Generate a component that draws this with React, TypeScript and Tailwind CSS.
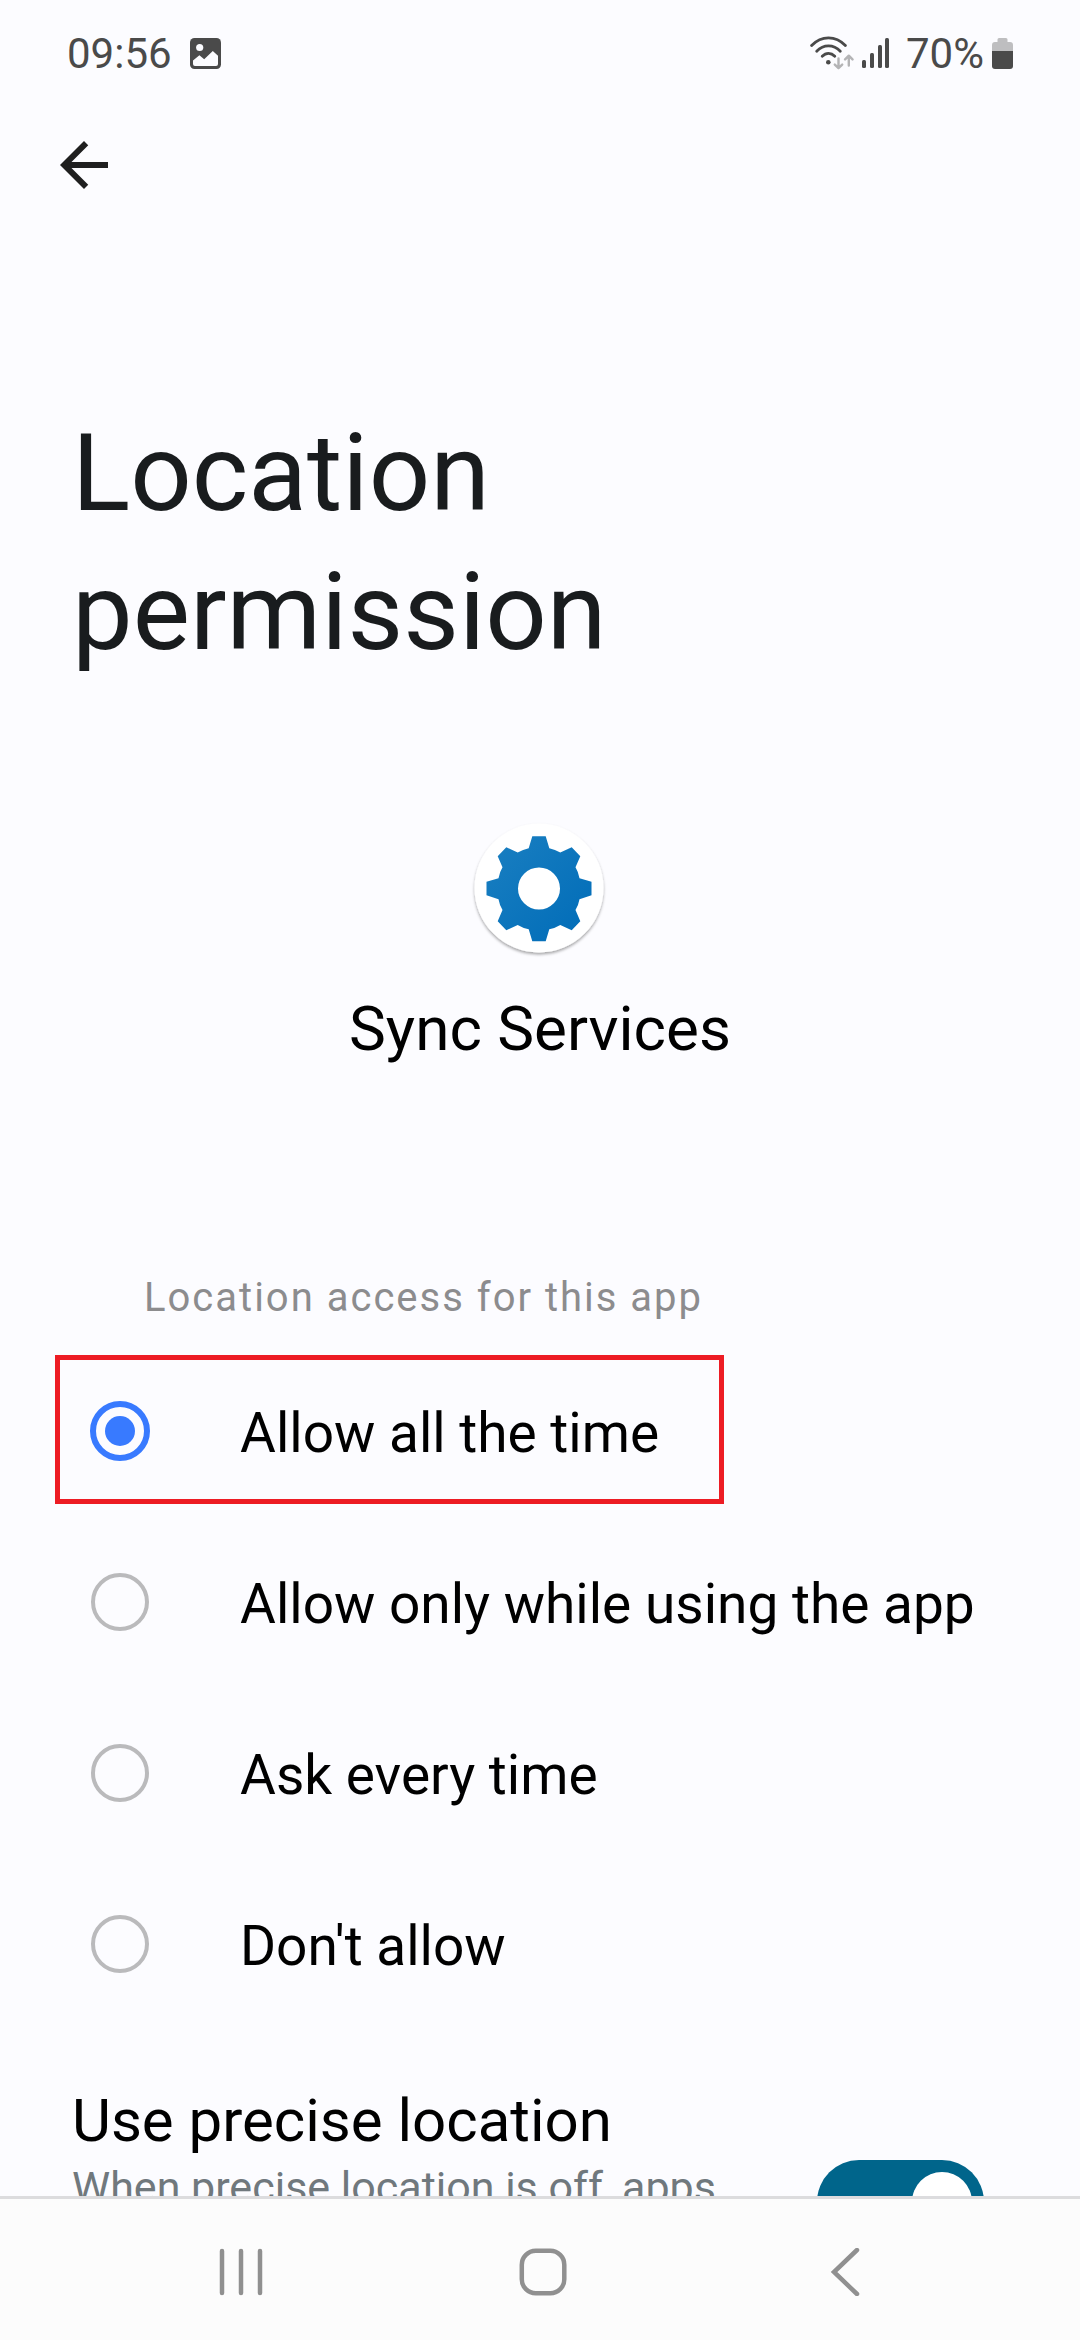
import { useState } from "react";

const OPTIONS = [
  { value: "always", label: "Allow all the time" },
  { value: "foreground", label: "Allow only while using the app" },
  { value: "ask", label: "Ask every time" },
  { value: "deny", label: "Don't allow" },
];

function PictureIcon() {
  return (
    <svg viewBox="0 0 31 31" className="size-[31px]" aria-hidden="true">
      <rect width="31" height="31" rx="4.5" fill="#4a4a4a" />
      <circle cx="9.7" cy="9.5" r="3.6" fill="#fcfcff" />
      <path
        d="M3 22.6 9.4 17.3 14.2 21.2 22.8 13 28 17.8V26a2 2 0 0 1-2 2H5a2 2 0 0 1-2-2z"
        fill="#fcfcff"
      />
    </svg>
  );
}

function WifiIcon() {
  return (
    <svg viewBox="0 0 44 34" className="h-[34px] w-11" fill="none" strokeLinecap="round" aria-hidden="true">
      <g stroke="#4a4a4a" strokeWidth="2.8">
        <path d="M1.6 9.6C11.5-.6 25.5-.6 35.4 9.6" />
        <path d="M6.7 15.2C13.5 8.2 23.5 8.2 30.3 15.2" />
        <path d="M12.2 20.3C16 16.4 21 16.4 24.8 20.3" />
      </g>
      <circle cx="18.3" cy="26.2" r="2.3" fill="#4a4a4a" />
      <g stroke="#b4b4b6" strokeWidth="2.4" strokeLinejoin="round">
        <path d="M28.5 22.5V32M24.8 28.6 28.5 32.2 32.2 28.6" />
        <path d="M38.8 29.5V20M35.1 23.4 38.8 19.7 42.5 23.4" />
      </g>
    </svg>
  );
}

function SignalIcon() {
  return (
    <svg viewBox="0 0 28 30" className="h-[30px] w-7" fill="#4a4a4a" aria-hidden="true">
      <rect x="0" y="22" width="4" height="8" rx="1.5" />
      <rect x="8" y="15" width="4" height="15" rx="1.5" />
      <rect x="16" y="7" width="4" height="23" rx="1.5" />
      <rect x="23" y="0" width="4" height="30" rx="1.5" />
    </svg>
  );
}

function BatteryIcon() {
  return (
    <svg viewBox="0 0 21 31" className="h-[31px] w-[21px]" aria-hidden="true">
      <path
        d="M7 0h7a1.5 1.5 0 0 1 1.5 1.5V4H18a3 3 0 0 1 3 3v6.5H0V7a3 3 0 0 1 3-3h2.5V1.5A1.5 1.5 0 0 1 7 0z"
        fill="#bebec0"
      />
      <path d="M0 13h21v15a3 3 0 0 1-3 3H3a3 3 0 0 1-3-3z" fill="#4a4a4a" />
    </svg>
  );
}

function AppIcon() {
  return (
    <svg viewBox="0 0 144 144" className="size-36" aria-hidden="true">
      <defs>
        <linearGradient id="gear" x1="0" y1="0" x2="1" y2="1">
          <stop offset="0" stopColor="#1a7fc1" />
          <stop offset="1" stopColor="#006cb8" />
        </linearGradient>
        <filter id="shadow" x="-10%" y="-10%" width="120%" height="125%">
          <feDropShadow dx="0" dy="2" stdDeviation="1.5" floodColor="#000" floodOpacity="0.35" />
        </filter>
      </defs>
      <circle cx="71" cy="71" r="64.5" fill="#fff" filter="url(#shadow)" />
      <path
        fill="url(#gear)"
        fillRule="evenodd"
        d="M64.3 19.2H77.7L81.3 31.2Q87 32.4 92.3 35.4L103.7 30.2 112.3 39.3 107.5 50.3Q110.5 55.3 111.5 61.2L123.5 64.8V78.2L111.5 82.2Q110.5 88 107.5 93L112.3 104.2 103.7 113.2 92.3 108Q87 111.2 81.3 112.3L77.7 124.3H64.3L60.7 112.3Q55 111.2 49.7 108L38.3 113.2 29.7 104.2 34.5 93Q31.5 88 30.5 82.2L18.5 78.2V64.8L30.5 61.2Q31.5 55.3 34.5 50.3L29.7 39.3 38.3 30.2 49.7 35.4Q55 32.4 60.7 31.2ZM71 50.5a21 21 0 1 0 0 42 21 21 0 1 0 0-42z"
      />
    </svg>
  );
}

export default function App() {
  const [access, setAccess] = useState("always");
  const [precise, setPrecise] = useState(true);

  return (
    <div className="flex h-screen flex-col bg-[#fcfcff] font-[Roboto,sans-serif] text-black">
      {/* Status bar */}
      <div className="flex h-[106px] shrink-0 items-center justify-between px-[67px] text-[42px] text-[#4a4a4a]">
        <div className="flex items-center gap-[18px]">
          <span>09:56</span>
          <PictureIcon />
        </div>
        <div className="flex items-center gap-2">
          <WifiIcon />
          <SignalIcon />
          <span className="pl-2">70%</span>
          <BatteryIcon />
        </div>
      </div>

      <main className="min-h-0 flex-1 overflow-hidden">
        <button type="button" aria-label="Back" className="mt-[23px] ml-12 block">
          <svg viewBox="0 0 24 24" className="size-[72px]" fill="#1f1f1f" aria-hidden="true">
            <path d="M20 11H7.83l5.59-5.59L12 4l-8 8 8 8 1.41-1.41L7.83 13H20v-2z" />
          </svg>
        </button>

        <h1 className="mt-[203px] max-w-[720px] pl-[72px] text-[108px] leading-[139px] text-[#191c1e]">
          Location permission
        </h1>

        <div className="mt-[135px] flex flex-col items-center">
          <AppIcon />
          <p className="mt-8 text-[62px] leading-[72px]">Sync Services</p>
        </div>

        <fieldset className="mt-[209px]">
          <legend className="pl-36 text-[40px] leading-12 tracking-wider text-[#8c8c8e]">
            Location access for this app
          </legend>
          <div className="mt-[33px] flex flex-col items-start gap-[22px] pl-[55px]">
            {OPTIONS.map((o) => (
              <label
                key={o.value}
                className={`flex h-[149px] items-center gap-[90px] border-[5px] pt-[3px] pr-[60px] pl-[30px] text-[55px] ${
                  access === o.value ? "border-[#ed1c24]" : "border-transparent"
                }`}
              >
                <input
                  type="radio"
                  name="access"
                  value={o.value}
                  checked={access === o.value}
                  onChange={() => setAccess(o.value)}
                  className="mx-px grid size-[58px] appearance-none place-content-center rounded-full border-4 border-[#bababc] before:size-[30px] before:rounded-full checked:mx-0 checked:size-[60px] checked:border-[6px] checked:border-[#387aff] checked:before:bg-[#387aff]"
                />
                <span className="pt-1">{o.label}</span>
              </label>
            ))}
          </div>
        </fieldset>

        <div className="mt-[66px] flex items-start justify-between pr-24 pl-[72px]">
          <div className="max-w-[680px]">
            <h2 id="precise" className="text-[60px] leading-[76px]">Use precise location</h2>
            <p className="text-[43px] leading-[56px] text-[#70787d]">
              When precise location is off, apps can access your approximate location
            </p>
          </div>
          <button
            type="button"
            role="switch"
            aria-checked={precise}
            aria-labelledby="precise"
            onClick={() => setPrecise(!precise)}
            className={`mt-[77px] flex h-[84px] w-[167px] items-center rounded-full px-3 ${
              precise ? "justify-end bg-[#00658b]" : "justify-start bg-[#bababc]"
            }`}
          >
            <span className="size-[60px] rounded-full bg-white" />
          </button>
        </div>
      </main>

      {/* System navigation */}
      <nav className="grid h-36 shrink-0 grid-cols-3 place-items-center border-t-[3px] border-[#dcdcde] bg-[#fcfcfc] pt-1 pr-[84px] pl-[90px]">
        <button type="button" aria-label="Recent apps">
          <svg viewBox="0 0 48 48" className="size-12" stroke="#909090" strokeWidth="4.5" strokeLinecap="round" fill="none">
            <path d="M5 3v42M24 3v42M43 3v42" />
          </svg>
        </button>
        <button type="button" aria-label="Home">
          <svg viewBox="0 0 48 48" className="size-12" stroke="#909090" strokeWidth="4.5" fill="none">
            <rect x="2.8" y="2.8" width="42.5" height="42.5" rx="14" />
          </svg>
        </button>
        <button type="button" aria-label="Back">
          <svg viewBox="0 0 48 48" className="size-12" stroke="#909090" strokeWidth="4.5" strokeLinecap="round" fill="none">
            <path d="M36 2 13 24 36 46" />
          </svg>
        </button>
      </nav>
    </div>
  );
}
